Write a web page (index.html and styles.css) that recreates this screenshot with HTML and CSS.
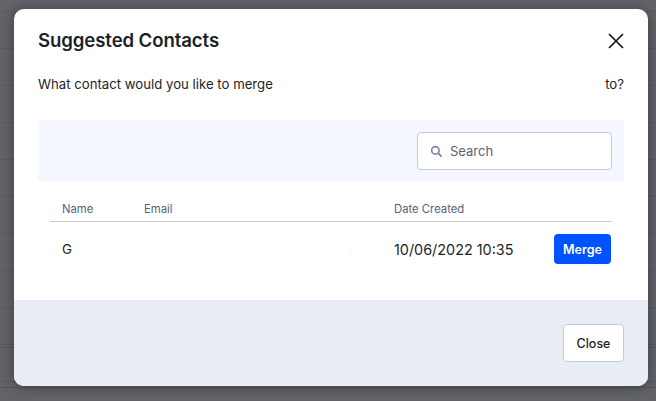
FILE: index.html
```html
<!DOCTYPE html>
<html lang="en">
<head>
<meta charset="utf-8">
<title>Suggested Contacts</title>
<link rel="stylesheet" href="styles.css">
</head>
<body>
<div class="backdrop">
  <div class="modal">
    <div class="body">
      <header class="head">
        <h2 class="title">Suggested Contacts</h2>
        <svg class="close-x" viewBox="0 0 16 16" width="16" height="16"><path d="M1 1L15 15M15 1L1 15" stroke="#14161c" stroke-width="1.7" fill="none"/></svg>
      </header>
      <p class="question"><span>What contact would you like to merge</span><span>to?</span></p>
      <div class="toolbar">
        <div class="search">
          <svg viewBox="0 0 14 14" width="13" height="13"><circle cx="5.8" cy="5.8" r="4" stroke="#7d869c" stroke-width="1.8" fill="none"/><path d="M8.8 8.8L12.4 12.4" stroke="#7d869c" stroke-width="1.9"/></svg>
          <span>Search</span>
        </div>
      </div>
      <div class="table">
        <div class="row thead"><span>Name</span><span>Email</span><span>Date Created</span><span></span></div>
        <div class="row tbody"><span>G</span><span class="email"><i class="speck"></i></span><span class="date">10/06/2022 10:35</span><span class="act"><button class="merge">Merge</button></span></div>
      </div>
    </div>
    <footer class="foot"><button class="close">Close</button></footer>
  </div>
</div>
</body>
</html>
```
FILE: styles.css
```css
* { box-sizing: border-box; }
html, body { margin: 0; height: 100%; }
body { font-family: "Inter", "Liberation Sans", sans-serif; color: #1c1f27; }
.backdrop {
  width: 656px; height: 401px; padding: 9px 32px 15px 14px; overflow: hidden;
  background-color: #636469;
  background-image:
    linear-gradient(#55565c, #55565c), linear-gradient(#55565c, #55565c),
    linear-gradient(#5a5b61 1px, transparent 1px);
  background-size: 100% 1px, 100% 1px, 100% 37px;
  background-position: 0 347px, 0 387px, 0 11px;
  background-repeat: no-repeat, no-repeat, repeat-y;
}
.modal {
  width: 634px; margin-right: -24px; height: 377px; background: #fff; border-radius: 10px; overflow: hidden;
  display: flex; flex-direction: column; box-shadow: 0 1px 14px rgba(0,0,0,.4);
}
.body { flex: 1; padding: 0 24px; }
.head { display: flex; justify-content: space-between; align-items: center; height: 62px; }
.title { margin: 0; font-size: 18.6px; font-weight: 600; letter-spacing: -0.1px; }
.close-x { margin-top: 2px; }
.question { display: flex; justify-content: space-between; margin: 0; font-size: 13.2px; line-height: 16px; padding-top: 5px; height: 49px; }
.toolbar { height: 62px; background: #f4f7fd; border-radius: 4px; display: flex; justify-content: flex-end; align-items: center; padding-right: 12px; }
.search { width: 195px; height: 38px; background: #fff; border: 1px solid #c5cad9; border-radius: 4px; display: flex; align-items: center; gap: 7px; padding-left: 12px; font-size: 13px; color: #5a6178; }
.table { margin: 0 12px; }
.row { display: grid; grid-template-columns: 82px 250px 1fr 60px; padding-left: 12px; align-items: center; }
.thead { height: 40px; padding-top: 14px; font-size: 11.3px; color: #5a6178; border-bottom: 1px solid #c9ccd6; }
.tbody { height: 56px; padding-bottom: 2px; font-size: 13.4px; }
.date { font-size: 14.4px; white-space: nowrap; }
.email { position: relative; height: 1px; }
.speck { position: absolute; left: 206px; top: 3px; width: 1px; height: 1px; background: #dcdde0; }
.act { display: flex; justify-content: flex-end; padding-right: 1px; }
.merge { width: 57px; height: 30px; border: 0; border-radius: 4px; background: #0052ff; color: #fff; font: 600 12.5px "Inter", "Liberation Sans", sans-serif; }
.foot { height: 86px; background: #e9edf5; display: flex; justify-content: flex-end; align-items: center; padding-right: 24px; }
.close { width: 61px; height: 38px; background: #fff; border: 1px solid #c5cad9; border-radius: 4px; color: #1c1f27; font: 500 12.5px "Inter", "Liberation Sans", sans-serif; }
```
